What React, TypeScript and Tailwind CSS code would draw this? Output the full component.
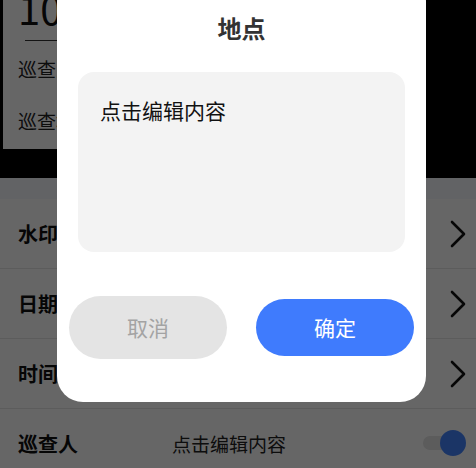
const font = { fontFamily: '"Noto Sans CJK SC", "Noto Sans", sans-serif' };

function Chevron() {
  return (
    <svg width="18" height="30" viewBox="0 0 18 30" fill="none" className="text-[#111]">
      <polyline points="3,3 15,15 3,27" stroke="currentColor" strokeWidth="2.6" strokeLinecap="round" strokeLinejoin="round" />
    </svg>
  );
}

function Row({ label, last }: { label: string; last?: boolean }) {
  return (
    <div className={`flex h-[70px] items-center justify-between pl-[18px] pr-[9px] ${last ? '' : 'border-b border-[#e6e6e6]'}`}>
      <span className="text-[20px] font-bold text-[#111]">{label}</span>
      <Chevron />
    </div>
  );
}

export default function App() {
  return (
    <div className="relative h-[468px] w-[476px] overflow-hidden bg-black" style={font}>
      {/* page underneath */}
      <div className="flex h-[178px] bg-black pl-[3px]">
        <div className="h-[149px] w-[360px] overflow-hidden bg-white pl-[15px]">
          <div className="mt-[-14px] text-[40px] leading-[44px] text-[#111]">10:25</div>
          <div className="ml-[7px] mt-[10px] h-px w-[300px] bg-[#333]" />
          <div className="mt-[15px] text-[19px] leading-[26px] text-[#222]">巡查人：张三</div>
          <div className="mt-[26px] text-[19px] leading-[26px] text-[#222]">巡查地点：厂区东门</div>
        </div>
      </div>
      <div className="h-[21px] bg-[#f6f8fc]" />
      <div className="bg-white">
        <Row label="水印" />
        <Row label="日期" />
        <Row label="时间" />
        <div className="flex h-[70px] items-center pl-[18px] pr-[10px]">
          <span className="w-[154px] text-[20px] font-bold text-[#111]">巡查人</span>
          <span className="flex-1 text-[19px] text-[#222]">点击编辑内容</span>
          <div className="relative mt-[-2px] h-[26px] w-[43px]">
            <div className="absolute left-0 top-[6px] h-[14px] w-[38px] rounded-full bg-[#e5e5e5]" />
            <div className="absolute right-0 top-0 h-[26px] w-[26px] rounded-full bg-[#4486ff]" />
          </div>
        </div>
      </div>

      {/* mask */}
      <div className="absolute inset-0 bg-black/60" />

      {/* dialog */}
      <div className="absolute left-[57px] top-[-24px] flex w-[369px] flex-col rounded-[26px] bg-white pb-[43px] pt-[36px]">
        <div className="text-center text-[24px] font-bold leading-[32px] text-[#333]">地点</div>
        <div className="mx-[21px] mt-[28px] h-[180px] rounded-[16px] bg-[#f3f3f3] pl-[22px] pt-[22px] text-[21px] leading-[32px] text-[#111]">
          点击编辑内容
        </div>
        <div className="mt-[44px] flex h-[63px] items-center justify-between px-[12px]">
          <button className="h-[63px] w-[158px] rounded-full bg-[#e4e4e4] text-[21px] text-[#a3a3a3]">取消</button>
          <button className="h-[57px] w-[158px] rounded-full bg-[#3f7bfd] text-[21px] text-white">确定</button>
        </div>
      </div>
    </div>
  );
}
